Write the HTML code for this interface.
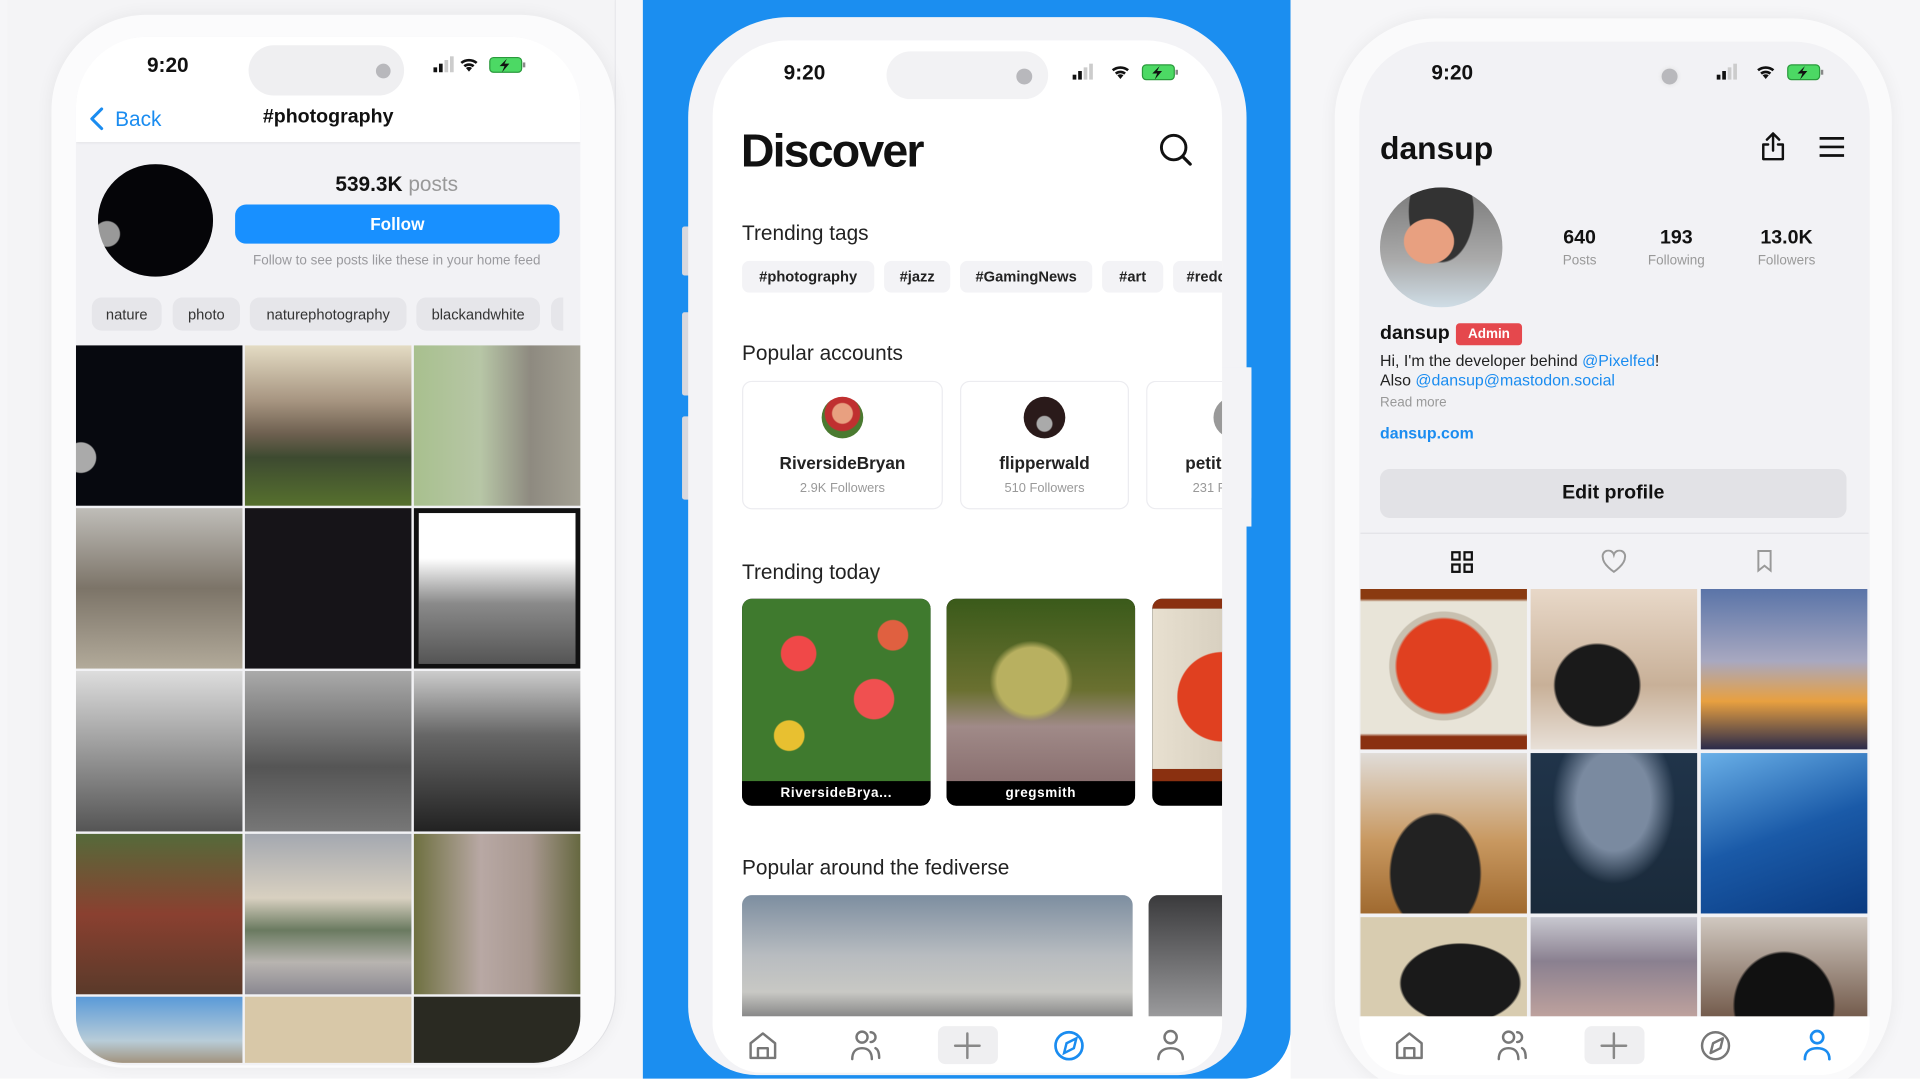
<!DOCTYPE html>
<html><head><meta charset="utf-8"><style>
*{margin:0;padding:0;box-sizing:border-box}
html,body{width:1920px;height:1079px;overflow:hidden;background:#fff;font-family:"Liberation Sans",sans-serif}
#w{position:absolute;left:0;top:0;width:1568px;height:881px;transform:scale(1.22449);transform-origin:0 0;background:#fff;overflow:hidden}
.a{position:absolute}
.t{position:absolute;white-space:nowrap;line-height:1}
.c{transform:translateX(-50%)}
.chip{position:absolute;height:27px;border-radius:8px;background:#e6e6ea;font-size:12px;color:#333;display:flex;align-items:center;justify-content:center}
.chip2{position:absolute;height:26px;border-radius:6px;background:#f3f3f6;font-size:12px;font-weight:bold;color:#222;display:flex;align-items:center;justify-content:center}
.card{position:absolute;top:311px;height:105px;border:1px solid #ececf0;border-radius:8px;background:#fff;overflow:hidden}
.tr{position:absolute;top:489px;height:169px;border-radius:8px;overflow:hidden;background:#000}
.tr .l{position:absolute;left:0;right:0;bottom:0;height:20px;background:#000;color:#fff;font-size:11px;font-weight:bold;display:flex;align-items:center;justify-content:center;letter-spacing:.5px}
</style></head><body><div id="w">

<!-- LEFT PANEL -->
<div class="a" style="left:0;top:0;width:525px;height:881px;background:#f6f6f8"></div>
<div class="a" style="left:6px;top:0;width:497px;height:872px;background:#f4f4f6;border-radius:0 0 60px 60px;border-right:1px solid #e6e6ea"></div>
<div class="a" style="left:42px;top:12px;width:460px;height:860px;background:#fbfbfc;border-radius:78px 78px 60px 60px;box-shadow:0 0 14px rgba(0,0,0,.06)"></div>
<div class="a" style="left:62px;top:30px;width:412px;height:840px;background:#f2f2f5;border-radius:58px 58px 40px 40px;overflow:hidden">
  <div class="a" style="left:0;top:0;width:412px;height:86px;background:#fff;box-shadow:0 1px 2px rgba(0,0,0,.06)"></div>
</div>
<div class="t" style="left:120px;top:45px;font-size:17px;font-weight:bold;color:#111">9:20</div>
<div class="a" style="left:203px;top:37px;width:127px;height:41px;border-radius:21px;background:#efeff1"></div>
<div class="a" style="left:307px;top:52px;width:12px;height:12px;border-radius:6px;background:#b8b8bc"></div>
<svg class="a" style="left:352px;top:45px" width="90" height="16" viewBox="0 0 90 16"><rect x="2" y="10" width="3" height="4" fill="#111"/><rect x="6.5" y="7" width="3" height="7" fill="#111"/><rect x="11" y="4" width="3" height="10" fill="#ccc"/><rect x="15.5" y="1" width="3" height="13" fill="#ccc"/><path d="M31 13.5l-2.5-3a4 4 0 015 0z M26.5 8.3a7 7 0 019 0l-1.4 1.6a5 5 0 00-6.2 0z M24 5.6a11 11 0 0114 0l-1.4 1.6a9 9 0 00-11.2 0z" fill="#111"/><rect x="48" y="2" width="26" height="12" rx="3" fill="#4cd964" stroke="#2a9a3c"/><rect x="75" y="6" width="2" height="4" fill="#888"/><path d="M62 3l-6 6h4l-2 5 6-7h-4z" fill="#111"/></svg>
<svg class="a" style="left:72px;top:87px" width="14" height="20" viewBox="0 0 14 20"><path d="M11 2L3 10l8 8" fill="none" stroke="#1a8cf0" stroke-width="2.5" stroke-linecap="round" stroke-linejoin="round"/></svg>
<div class="t" style="left:94px;top:89px;font-size:17px;color:#1a8cf0">Back</div>
<div class="t c" style="left:268px;top:88px;font-size:16px;font-weight:bold;color:#111">#photography</div>
<div class="a" style="left:80px;top:134px;width:94px;height:92px;border-radius:50%;background:radial-gradient(circle at 8% 62%,#999 0 10px,transparent 11px),#050508"></div>
<div class="t c" style="left:324px;top:142px;font-size:17px;color:#111"><b>539.3K</b> <span style="color:#999">posts</span></div>
<div class="a" style="left:192px;top:167px;width:265px;height:32px;border-radius:9px;background:#1890ff;color:#fff;font-weight:bold;font-size:14px;display:flex;align-items:center;justify-content:center">Follow</div>
<div class="t c" style="left:324px;top:208px;font-size:11px;color:#9a9a9e">Follow to see posts like these in your home feed</div>
<div class="chip" style="left:75px;top:243px;width:57px">nature</div>
<div class="chip" style="left:141px;top:243px;width:55px">photo</div>
<div class="chip" style="left:204px;top:243px;width:128px">naturephotography</div>
<div class="chip" style="left:340px;top:243px;width:101px">blackandwhite</div>
<div class="chip" style="left:450px;top:243px;width:10px;border-radius:8px 0 0 8px"></div>
<div class="a" style="left:62px;top:282px;width:412px;height:586px;overflow:hidden;border-radius:0 0 38px 38px">
 <div class="a" style="left:0;top:0;width:136px;height:131px;background:radial-gradient(circle at 3% 70%,#aaa 0 12px,transparent 13px),#07090f"></div>
 <div class="a" style="left:138px;top:0;width:136px;height:131px;background:linear-gradient(#e4dcc4 0,#a69480 35%,#6e6050 55%,#3d4a30 70%,#56702e 100%)"></div>
 <div class="a" style="left:276px;top:0;width:136px;height:131px;background:linear-gradient(90deg,#a8c08e,#b7c6a6 40%,#8e8a80 70%,#a3a093)"></div>
 <div class="a" style="left:0;top:133px;width:136px;height:131px;background:linear-gradient(#bfbdb8,#7c7468 50%,#b2aa9a)"></div>
 <div class="a" style="left:138px;top:133px;width:136px;height:131px;background:#161418"></div>
 <div class="a" style="left:276px;top:133px;width:136px;height:131px;background:linear-gradient(#fff 30%,#8a8a8a 60%,#555);border:4px solid #111"></div>
 <div class="a" style="left:0;top:266px;width:136px;height:131px;background:linear-gradient(#ddd,#999 50%,#555)"></div>
 <div class="a" style="left:138px;top:266px;width:136px;height:131px;background:linear-gradient(#aaa,#555 60%,#777)"></div>
 <div class="a" style="left:276px;top:266px;width:136px;height:131px;background:linear-gradient(#ccc,#666 40%,#222)"></div>
 <div class="a" style="left:0;top:399px;width:136px;height:131px;background:linear-gradient(#556a3a,#8a4030 50%,#5a3a2a)"></div>
 <div class="a" style="left:138px;top:399px;width:136px;height:131px;background:linear-gradient(#a4a8b0,#d8d0c0 40%,#6a7a60 60%,#b8b4b0 80%,#8a8890)"></div>
 <div class="a" style="left:276px;top:399px;width:136px;height:131px;background:linear-gradient(90deg,#6e7040,#b8a8a4 40%,#a89890 70%,#666840)"></div>
 <div class="a" style="left:0;top:532px;width:136px;height:60px;background:linear-gradient(#5a9ad8,#b8ccd8 60%,#9a8060)"></div>
 <div class="a" style="left:138px;top:532px;width:136px;height:60px;background:#d8c8a8"></div>
 <div class="a" style="left:276px;top:532px;width:136px;height:60px;background:#2a2a22"></div>
</div>

<!-- MIDDLE PANEL -->
<div class="a" style="left:525px;top:0;width:529px;height:881px;background:#1b8ef0;border-radius:0 0 40px 0"></div>
<div class="a" style="left:557px;top:185px;width:8px;height:40px;background:#d8d8de;border-radius:2px"></div>
<div class="a" style="left:557px;top:255px;width:8px;height:68px;background:#d8d8de;border-radius:2px"></div>
<div class="a" style="left:557px;top:340px;width:8px;height:68px;background:#d8d8de;border-radius:2px"></div>
<div class="a" style="left:1015px;top:300px;width:7px;height:108px;background:#d8d8de;border-radius:2px"></div>
<div class="a" style="left:562px;top:14px;width:456px;height:864px;background:#f3f3f6;border-radius:82px 82px 56px 56px"></div>
<div class="a" style="left:582px;top:33px;width:416px;height:843px;background:#fff;border-radius:62px 62px 40px 40px;overflow:hidden"></div>
<div class="t" style="left:640px;top:51px;font-size:17px;font-weight:bold;color:#111">9:20</div>
<div class="a" style="left:724px;top:42px;width:132px;height:39px;border-radius:20px;background:#f2f2f4"></div>
<div class="a" style="left:830px;top:56px;width:13px;height:13px;border-radius:7px;background:#b8b8bc"></div>
<svg class="a" style="left:874px;top:51px" width="90" height="16" viewBox="0 0 90 16"><rect x="2" y="10" width="3" height="4" fill="#111"/><rect x="6.5" y="7" width="3" height="7" fill="#111"/><rect x="11" y="4" width="3" height="10" fill="#ccc"/><rect x="15.5" y="1" width="3" height="13" fill="#ccc"/><path d="M41 13.5l-2.5-3a4 4 0 015 0z M36.5 8.3a7 7 0 019 0l-1.4 1.6a5 5 0 00-6.2 0z M34 5.6a11 11 0 0114 0l-1.4 1.6a9 9 0 00-11.2 0z" fill="#111"/><rect x="59" y="2" width="26" height="12" rx="3" fill="#4cd964" stroke="#2a9a3c"/><rect x="86" y="6" width="2" height="4" fill="#888"/><path d="M73 3l-6 6h4l-2 5 6-7h-4z" fill="#111"/></svg>
<div class="t" style="left:605px;top:105px;font-size:38px;font-weight:bold;color:#111;letter-spacing:-1.5px">Discover</div>
<svg class="a" style="left:946px;top:108px" width="28" height="28" viewBox="0 0 28 28"><circle cx="12.5" cy="12.5" r="10" fill="none" stroke="#111" stroke-width="2.4"/><path d="M20 20l6 6" stroke="#111" stroke-width="2.6" stroke-linecap="round"/></svg>
<div class="t" style="left:606px;top:182px;font-size:17px;color:#222">Trending tags</div>
<div class="chip2" style="left:606px;top:213px;width:108px">#photography</div>
<div class="chip2" style="left:722px;top:213px;width:54px">#jazz</div>
<div class="chip2" style="left:784px;top:213px;width:108px">#GamingNews</div>
<div class="chip2" style="left:900px;top:213px;width:50px">#art</div>
<div class="chip2" style="left:958px;top:213px;width:40px;justify-content:flex-start;padding-left:11px;border-radius:6px 0 0 6px;overflow:hidden">#redd</div>
<div class="t" style="left:606px;top:280px;font-size:17px;color:#222">Popular accounts</div>
<div class="card" style="left:606px;width:164px"><div class="a" style="left:64px;top:12px;width:34px;height:34px;border-radius:50%;background:radial-gradient(circle at 50% 40%,#e8a080 0 8px,#c03030 9px 14px,#4a7a30 15px)"></div><div class="t c" style="left:81px;top:59px;font-size:14px;font-weight:bold;color:#222">RiversideBryan</div><div class="t c" style="left:81px;top:82px;font-size:10.5px;color:#999">2.9K Followers</div></div>
<div class="card" style="left:784px;width:138px"><div class="a" style="left:51px;top:12px;width:34px;height:34px;border-radius:50%;background:radial-gradient(circle at 50% 65%,#aaa 0 6px,#2a1a1a 7px)"></div><div class="t c" style="left:68px;top:59px;font-size:14px;font-weight:bold;color:#222">flipperwald</div><div class="t c" style="left:68px;top:82px;font-size:10.5px;color:#999">510 Followers</div></div>
<div class="card" style="left:936px;width:70px;border-right:none"><div class="a" style="left:54px;top:12px;width:34px;height:34px;border-radius:50%;background:#999"></div><div class="t" style="left:31px;top:59px;font-size:14px;font-weight:bold;color:#222">petit</div><div class="t" style="left:37px;top:82px;font-size:10.5px;color:#999">231 F</div></div>
<div class="a" style="left:998px;top:300px;width:24px;height:130px;background:#f3f3f6"></div>
<div class="t" style="left:606px;top:459px;font-size:17px;color:#222">Trending today</div>
<div class="tr" style="left:606px;width:154px"><div class="a" style="inset:0 0 20px 0;background:radial-gradient(circle at 30% 30%,#f04848 0 14px,transparent 15px),radial-gradient(circle at 70% 55%,#f05050 0 16px,transparent 17px),radial-gradient(circle at 25% 75%,#e8c030 0 12px,transparent 13px),radial-gradient(circle at 80% 20%,#e06040 0 12px,transparent 13px),#3f7a2e"></div><div class="l">RiversideBrya...</div></div>
<div class="tr" style="left:773px;width:154px"><div class="a" style="inset:0 0 20px 0;background:radial-gradient(ellipse at 45% 45%,#b8b060 0 28px,transparent 34px),linear-gradient(#3a5a1a,#6a7030 50%,#a08a88 70%,#8a7070)"></div><div class="l">gregsmith</div></div>
<div class="tr" style="left:941px;width:57px;border-radius:8px 0 0 8px"><div class="a" style="inset:0 0 20px 0;background:radial-gradient(circle at 100% 55%,#e04020 0 36px,transparent 37px),linear-gradient(90deg,#e8e0d0,#d8d0c0);border-top:8px solid #8a3010;border-bottom:10px solid #8a3010"></div></div>
<div class="t" style="left:606px;top:700px;font-size:17px;color:#222">Popular around the fediverse</div>
<div class="a" style="left:606px;top:731px;width:319px;height:99px;border-radius:8px 8px 0 0;background:linear-gradient(#7d8ea0,#b8bcc0 50%,#c8c8c4 80%,#888)"></div>
<div class="a" style="left:938px;top:731px;width:60px;height:99px;border-radius:8px 0 0 0;background:linear-gradient(#3a3a3c,#9a9a9c)"></div>
<div class="a" style="left:582px;top:830px;width:416px;height:46px;background:#fff;border-radius:0 0 40px 40px"></div>
<div class="a" style="left:766px;top:838px;width:49px;height:31px;background:#efeff1;border-radius:6px"></div>

<!-- RIGHT PANEL -->
<div class="a" style="left:1054px;top:0;width:514px;height:881px;background:#f6f6f8"></div>
<div class="a" style="left:1090px;top:15px;width:455px;height:880px;background:#fafafb;border-radius:82px;box-shadow:0 0 14px rgba(0,0,0,.06)"></div>
<div class="a" style="left:1110px;top:34px;width:417px;height:844px;background:#f2f2f5;border-radius:62px 62px 40px 40px"></div>
<div class="t" style="left:1169px;top:51px;font-size:17px;font-weight:bold;color:#111">9:20</div>
<div class="a" style="left:1357px;top:56px;width:13px;height:13px;border-radius:7px;background:#b8b8bc;box-shadow:0 0 4px #ddd"></div>
<svg class="a" style="left:1400px;top:51px" width="90" height="16" viewBox="0 0 90 16"><rect x="2" y="10" width="3" height="4" fill="#111"/><rect x="6.5" y="7" width="3" height="7" fill="#111"/><rect x="11" y="4" width="3" height="10" fill="#ccc"/><rect x="15.5" y="1" width="3" height="13" fill="#ccc"/><path d="M42 13.5l-2.5-3a4 4 0 015 0z M37.5 8.3a7 7 0 019 0l-1.4 1.6a5 5 0 00-6.2 0z M35 5.6a11 11 0 0114 0l-1.4 1.6a9 9 0 00-11.2 0z" fill="#111"/><rect x="60" y="2" width="26" height="12" rx="3" fill="#4cd964" stroke="#2a9a3c"/><rect x="87" y="6" width="2" height="4" fill="#888"/><path d="M74 3l-6 6h4l-2 5 6-7h-4z" fill="#111"/></svg>
<div class="t" style="left:1127px;top:108px;font-size:26px;font-weight:bold;color:#111">dansup</div>
<svg class="a" style="left:1437px;top:107px" width="22" height="26" viewBox="0 0 22 26"><path d="M11 2v14M6 7l5-5 5 5M7 11H3v12h16V11h-4" fill="none" stroke="#111" stroke-width="2" stroke-linecap="round" stroke-linejoin="round"/></svg>
<svg class="a" style="left:1485px;top:111px" width="22" height="18" viewBox="0 0 22 18"><path d="M1 2h20M1 9h20M1 16h20" stroke="#111" stroke-width="2.2"/></svg>
<div class="a" style="left:1127px;top:153px;width:100px;height:98px;border-radius:50%;background:radial-gradient(ellipse at 40% 45%,#e8a080 0 20px,transparent 21px),radial-gradient(ellipse at 50% 20%,#333 0 26px,transparent 27px),linear-gradient(#7a7a7a,#aaa 60%,#cfdde6)"></div>
<div class="t c" style="left:1290px;top:187px;font-size:16px;font-weight:bold;color:#111">640</div><div class="t c" style="left:1290px;top:208px;font-size:11px;color:#999">Posts</div>
<div class="t c" style="left:1369px;top:187px;font-size:16px;font-weight:bold;color:#111">193</div><div class="t c" style="left:1369px;top:208px;font-size:11px;color:#999">Following</div>
<div class="t c" style="left:1459px;top:187px;font-size:16px;font-weight:bold;color:#111">13.0K</div><div class="t c" style="left:1459px;top:208px;font-size:11px;color:#999">Followers</div>
<div class="t" style="left:1127px;top:265px;font-size:16px;font-weight:bold;color:#111">dansup</div>
<div class="a" style="left:1189px;top:264px;width:54px;height:18px;border-radius:3px;background:#e5484d;color:#fff;font-size:11px;font-weight:bold;display:flex;align-items:center;justify-content:center">Admin</div>
<div class="t" style="left:1127px;top:288px;font-size:13px;color:#222">Hi, I'm the developer behind <span style="color:#1a8cf0">@Pixelfed</span>!</div>
<div class="t" style="left:1127px;top:304px;font-size:13px;color:#222">Also <span style="color:#1a8cf0">@dansup@mastodon.social</span></div>
<div class="t" style="left:1127px;top:324px;font-size:11px;color:#999">Read more</div>
<div class="t" style="left:1127px;top:347px;font-size:13px;font-weight:bold;color:#1a8cf0">dansup.com</div>
<div class="a" style="left:1127px;top:383px;width:381px;height:40px;border-radius:8px;background:#e2e2e6;font-size:16px;font-weight:bold;color:#111;display:flex;align-items:center;justify-content:center">Edit profile</div>
<div class="a" style="left:1111px;top:435px;width:415px;height:1px;background:#e2e2e6"></div>
<svg class="a" style="left:1185px;top:450px" width="18" height="18" viewBox="0 0 18 18"><g fill="none" stroke="#111" stroke-width="1.8"><rect x="1" y="1" width="6" height="6"/><rect x="11" y="1" width="6" height="6"/><rect x="1" y="11" width="6" height="6"/><rect x="11" y="11" width="6" height="6"/></g></svg>
<svg class="a" style="left:1307px;top:449px" width="22" height="20" viewBox="0 0 22 20"><path d="M11 18S2 12 2 6.5A4.5 4.5 0 0111 4a4.5 4.5 0 019 2.5C20 12 11 18 11 18z" fill="none" stroke="#999" stroke-width="1.6"/></svg>
<svg class="a" style="left:1434px;top:449px" width="14" height="19" viewBox="0 0 14 19"><path d="M2 1h10v16l-5-4-5 4z" fill="none" stroke="#999" stroke-width="1.6"/></svg>
<div class="a" style="left:1111px;top:481px;width:415px;height:349px;overflow:hidden">
 <div class="a" style="left:0;top:0;width:136px;height:131px;background:radial-gradient(circle at 50% 48%,#e04020 0 38px,#c8c0b0 40px 44px,transparent 45px),linear-gradient(#8a3a10 0 6%,#e8e4d8 8% 90%,#8a3010 92%)"></div>
 <div class="a" style="left:139px;top:0;width:136px;height:131px;background:radial-gradient(ellipse at 40% 60%,#1a1a1a 0 34px,transparent 36px),linear-gradient(#e8d8c8,#c8b098 60%,#e8e0d8)"></div>
 <div class="a" style="left:278px;top:0;width:136px;height:131px;background:linear-gradient(#5a74a8,#a8a8c0 45%,#e8a040 70%,#2a2a4a)"></div>
 <div class="a" style="left:0;top:134px;width:136px;height:131px;background:radial-gradient(ellipse at 45% 75%,#222 0 36px,transparent 38px),linear-gradient(#e0dcd8,#c89860 55%,#a06a30)"></div>
 <div class="a" style="left:139px;top:134px;width:136px;height:131px;background:radial-gradient(ellipse at 50% 30%,#7a8aa0 0 30px,transparent 50px),linear-gradient(#20344a,#1a2a3a)"></div>
 <div class="a" style="left:278px;top:134px;width:136px;height:131px;background:linear-gradient(160deg,#6ab0e8,#1a5aa8 50%,#0a3a80)"></div>
 <div class="a" style="left:0;top:268px;width:136px;height:90px;background:radial-gradient(ellipse at 60% 60%,#1a1a1a 0 48px,transparent 50px),#d8ccb0"></div>
 <div class="a" style="left:139px;top:268px;width:136px;height:90px;background:linear-gradient(#c8c8d0,#8a8090 40%,#c8a8a0)"></div>
 <div class="a" style="left:278px;top:268px;width:136px;height:90px;background:radial-gradient(ellipse at 50% 80%,#111 0 40px,transparent 42px),linear-gradient(#d0c8c0,#6a5040)"></div>
</div>
<div class="a" style="left:1110px;top:830px;width:417px;height:48px;background:#fff;border-radius:0 0 40px 40px"></div>
<div class="a" style="left:1294px;top:838px;width:49px;height:31px;background:#efeff1;border-radius:6px"></div>

<!-- TAB BAR ICONS -->
<svg class="a" style="left:600px;top:838px" width="400" height="32" viewBox="0 0 400 32">
 <g fill="none" stroke="#777" stroke-width="2" stroke-linecap="round" stroke-linejoin="round">
  <path d="M13 26V14l10-8 10 8v12zM19 26v-8h8v8"/>
  <circle cx="104" cy="9" r="4.5"/><path d="M96 27c0-6 3-9 8-9s8 3 8 9M111 5a4 4 0 010 8M115 18c2 1 3 4 3 8"/>
  <path d="M190 6v20M180 16h20" stroke="#888"/>
  <circle cx="356" cy="9" r="5"/><path d="M346 27c0-6 4-9 10-9s10 3 10 9"/>
 </g>
 <circle cx="273" cy="16" r="11" fill="none" stroke="#1a8cf0" stroke-width="2.2"/><path d="M279 10l-8 4-2 8 8-4z" fill="none" stroke="#1a8cf0" stroke-width="2"/>
</svg>
<svg class="a" style="left:1128px;top:838px" width="400" height="32" viewBox="0 0 400 32">
 <g fill="none" stroke="#777" stroke-width="2" stroke-linecap="round" stroke-linejoin="round">
  <path d="M13 26V14l10-8 10 8v12zM19 26v-8h8v8"/>
  <circle cx="104" cy="9" r="4.5"/><path d="M96 27c0-6 3-9 8-9s8 3 8 9M111 5a4 4 0 010 8M115 18c2 1 3 4 3 8"/>
  <path d="M190 6v20M180 16h20" stroke="#888"/>
  <circle cx="273" cy="16" r="11"/><path d="M279 10l-8 4-2 8 8-4z"/>
 </g>
 <g fill="none" stroke="#1a8cf0" stroke-width="2.2" stroke-linecap="round"><circle cx="356" cy="9" r="5"/><path d="M346 27c0-6 4-9 10-9s10 3 10 9"/></g>
</svg>

</div></body></html>
